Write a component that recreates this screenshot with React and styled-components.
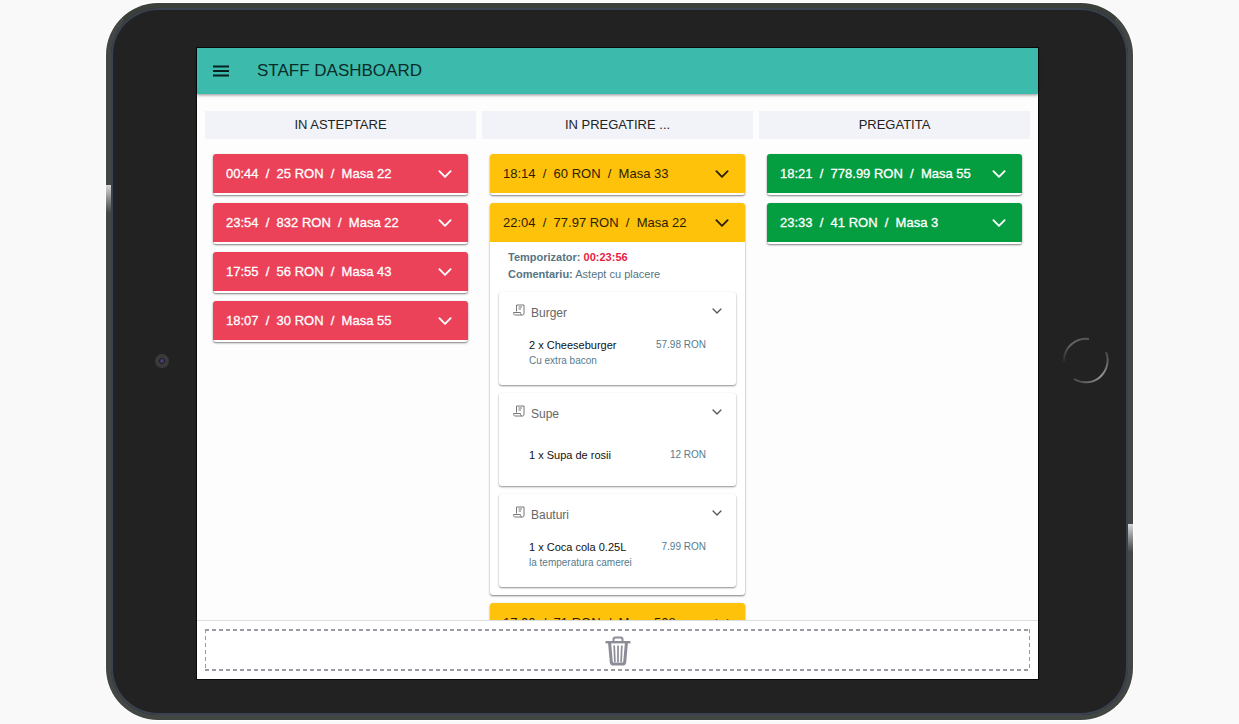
import React, { useState } from 'react'
import styled, { createGlobalStyle, css } from 'styled-components'
import { IoChevronDown } from 'react-icons/io5'

const GlobalStyle = createGlobalStyle`
  * {
    box-sizing: border-box;
  }
  body {
    margin: 0;
    background-color: #f9f9f9;
    font-family: 'Liberation Sans', Arial, sans-serif;
  }
  button {
    font-family: inherit;
    border: 0;
    padding: 0;
    background: none;
    cursor: pointer;
  }
  h1, h2, h3, p, ul {
    margin: 0;
    padding: 0;
    font-weight: normal;
  }
`
const Page = styled.div`
  display: flex;
  height: 100vh;
  padding: 3px 106px 4px;
`
const Tablet = styled.div`
  position: relative;
  display: flex;
  flex: 1;
  min-width: 0;
  padding: 40px 0 36px;
  border: 5px solid #424743;
  border-top-color: #3a3f3a;
  border-radius: 52px;
  background-color: #222;
  box-shadow: inset 0 0 0 2px #3a4150, 0 0 0 1px #fff;
`
const SideButton = styled.span`
  position: absolute;
  width: 5px;
  height: 28px;
  background: linear-gradient(#d8d8d8, #8a8c8a 50%, #424743);
  ${props =>
    props.$side === 'left'
      ? css`
          left: -5px;
          top: 25%;
        `
      : css`
          right: -5px;
          top: 73%;
        `}
`
const Bezel = styled.div`
  display: flex;
  flex: none;
  align-items: center;
  justify-content: center;
  width: ${props => props.$width};
  padding-bottom: 5px;
`
const Camera = styled.span`
  width: 14px;
  height: 14px;
  margin-left: 16px;
  border: 4px solid #3a3a3a;
  border-radius: 50%;
  background-color: #4c3c6b;
  box-shadow: inset 0 0 0 1px #1b1725;
`
const HomeButton = styled.button`
  width: 48px;
  height: 48px;
  margin-left: 6px;
`
const Screen = styled.div`
  display: flex;
  flex: 1;
  flex-direction: column;
  min-width: 0;
  background-color: #fdfdfd;
  box-shadow: 0 0 0 1px #0a0a0a;
`
const Header = styled.header`
  display: flex;
  flex: none;
  align-items: center;
  height: 46px;
  padding: 0 16px;
  gap: 28px;
  background-color: #3cbbad;
  color: #0b2b28;
  box-shadow: 0 1px 3px rgba(0, 0, 0, 0.45);
`
const MenuButton = styled.button`
  display: flex;
  color: #06211e;
`
const Title = styled.h1`
  font-size: 17px;
  line-height: 20px;
`
const Board = styled.main`
  display: grid;
  flex: 1;
  grid-template-columns: repeat(3, minmax(0, 1fr));
  gap: 6px;
  min-height: 0;
  padding: 17px 8px 0;
  overflow: hidden;
`
const ColumnTitle = styled.h2`
  background-color: #f2f3f8;
  color: #222;
  font-size: 13px;
  line-height: 28px;
  text-align: center;
`
const OrderList = styled.div`
  display: flex;
  flex-direction: column;
  gap: 8px;
  padding: 15px 8px 0;
`
const OrderCard = styled.article`
  padding-bottom: 2px;
  border-radius: 3px;
  background-color: #fff;
  box-shadow: 0 1px 2px rgba(0, 0, 0, 0.5);
`
const colors = {
  waiting: { background: '#eb4259', text: '#fff' },
  cooking: { background: '#ffc20a', text: '#2b2100' },
  ready: { background: '#049d40', text: '#fff' }
}
const OrderHeader = styled.button`
  display: flex;
  align-items: center;
  justify-content: space-between;
  width: 100%;
  height: 39px;
  padding: 0 13px;
  border-radius: 3px 3px 0 0;
  background-color: ${props => colors[props.$status].background};
  color: ${props => colors[props.$status].text};
  font-size: 13px;
  white-space: pre;
  ${props =>
    props.$status !== 'cooking' &&
    css`
      -webkit-text-stroke: 0.3px #fff;
    `}
`
const OrderBody = styled.div`
  display: flex;
  flex-direction: column;
  gap: 8px;
  padding: 7px 9px 6px;
`
const Info = styled.div`
  padding: 0 9px 1px;
  color: #567483;
  font-size: 11px;
  line-height: 17px;
`
const Timer = styled.strong`
  color: #e8213f;
`
const GroupCard = styled.section`
  height: 93px;
  padding: 12px 12px 0 14px;
  border-radius: 3px;
  background-color: #fff;
  box-shadow: 0 1px 2px rgba(0, 0, 0, 0.45);
`
const GroupHeader = styled.button`
  display: flex;
  align-items: flex-start;
  width: 100%;
  gap: 6px;
  color: #555;
`
const GroupName = styled.span`
  flex: 1;
  color: #666;
  font-size: 12px;
  line-height: 18px;
  text-align: left;
`
const Product = styled.div`
  display: flex;
  justify-content: space-between;
  padding: ${props => (props.$single ? '24px' : '15px')} 18px 0 16px;
  color: #567b8c;
  font-size: 10px;
  line-height: 16px;
`
const ProductName = styled.p`
  color: #111;
  font-size: 11px;
`
const Footer = styled.footer`
  flex: none;
  padding: 8px;
  border-top: 1px solid #ddd;
  background-color: #fff;
`
const dashes = direction =>
  `repeating-linear-gradient(${direction}, #9a9ba3 0 4px, transparent 4px 7px)`

const TrashButton = styled.button`
  display: flex;
  align-items: center;
  justify-content: center;
  width: 100%;
  height: 42px;
  padding-top: 2px;
  background: ${dashes('90deg')} top / 100% 2px no-repeat,
    ${dashes('90deg')} bottom / 100% 2px no-repeat,
    ${dashes('180deg')} left / 1px 100% no-repeat,
    ${dashes('180deg')} right / 1px 100% no-repeat;
`

const MenuIcon = () => (
  <svg width='16' height='12' stroke='currentColor' strokeWidth='2'>
    <path d='M0 1.5H16M0 6H16M0 10.5H16' />
  </svg>
)

const TrashIcon = () => (
  <svg width='26' height='30' viewBox='0 0 26 30' fill='none' stroke='#8c8c98'>
    <path d='M8.5 6V3.5Q8.500 1.500 10.500 1.500H15.500Q17.500 1.500 17.500 3.500V6' strokeWidth='2' />
    <path d='M.5 6.200H25.500' strokeWidth='2.400' />
    <path
      d='M4.500 6L6.300 26Q6.500 28 8.500 28H17.500Q19.500 28 19.700 26L21.500 6'
      strokeWidth='3'
    />
    <path d='M9.200 9.500L9.900 26M13 9.500V26M16.800 9.500L16.100 26' strokeWidth='1.700' />
  </svg>
)

const ReceiptIcon = () => (
  <svg
    width='12'
    height='12'
    viewBox='0 0 24 24'
    fill='none'
    stroke='#777'
    strokeWidth='2'
  >
    <path d='M7 15V2h15v16c0 3-1 4-3 4H4c-2 0-3-2-3-5h14c0 3 1 5 3 5' />
    <path d='M11 6h7M11 10h5' />
  </svg>
)

const HomeRing = () => (
  <svg width='48' height='48' viewBox='0 0 48 48' fill='none' strokeWidth='2'>
    <defs>
      <linearGradient id='ringLow' x1='1' y1='0' x2='0' y2='1'>
        <stop offset='0' stopColor='#444' />
        <stop offset='0.5' stopColor='#999' />
        <stop offset='1' stopColor='#444' />
      </linearGradient>
      <linearGradient id='ringHigh' x1='1' y1='0' x2='0' y2='1'>
        <stop offset='0' stopColor='#555' />
        <stop offset='0.5' stopColor='#666' />
        <stop offset='1' stopColor='#2a2a2a' />
      </linearGradient>
    </defs>
    <path d='M44 15A22 22 0 0 1 12 42' stroke='url(#ringLow)' />
    <path d='M2 25A22 22 0 0 1 27 2' stroke='url(#ringHigh)' />
  </svg>
)

const columns = [
  {
    title: 'IN ASTEPTARE',
    status: 'waiting',
    orders: [
      { time: '00:44', total: '25', table: '22' },
      { time: '23:54', total: '832', table: '22' },
      { time: '17:55', total: '56', table: '43' },
      { time: '18:07', total: '30', table: '55' }
    ]
  },
  {
    title: 'IN PREGATIRE ...',
    status: 'cooking',
    orders: [
      { time: '18:14', total: '60', table: '33' },
      {
        time: '22:04',
        total: '77.97',
        table: '22',
        timer: '00:23:56',
        comment: 'Astept cu placere',
        groups: [
          {
            name: 'Burger',
            product: 'Cheeseburger',
            count: 2,
            price: '57.98',
            note: 'Cu extra bacon'
          },
          { name: 'Supe', product: 'Supa de rosii', count: 1, price: '12' },
          {
            name: 'Bauturi',
            product: 'Coca cola 0.25L',
            count: 1,
            price: '7.99',
            note: 'la temperatura camerei'
          }
        ]
      },
      { time: '17:00', total: '71', table: '508' }
    ]
  },
  {
    title: 'PREGATITA',
    status: 'ready',
    orders: [
      { time: '18:21', total: '778.99', table: '55' },
      { time: '23:33', total: '41', table: '3' }
    ]
  }
]

const Group = ({ group }) => {
  const [open, setOpen] = useState(true)

  return (
    <GroupCard>
      <GroupHeader onClick={() => setOpen(!open)}>
        <ReceiptIcon />
        <GroupName>{group.name}</GroupName>
        <IoChevronDown size={14} />
      </GroupHeader>
      {open && (
        <Product $single={!group.note}>
          <div>
            <ProductName>
              {group.count} x {group.product}
            </ProductName>
            {group.note && <p>{group.note}</p>}
          </div>
          <p>{group.price} RON</p>
        </Product>
      )}
    </GroupCard>
  )
}

const Order = ({ order, status }) => {
  const [open, setOpen] = useState(true)

  return (
    <OrderCard>
      <OrderHeader $status={status} onClick={() => setOpen(!open)}>
        <span>{`${order.time}  /  ${order.total} RON  /  Masa ${order.table}`}</span>
        <IoChevronDown size={20} />
      </OrderHeader>
      {open && order.groups && (
        <OrderBody>
          <Info>
            <p>
              <strong>Temporizator:</strong> <Timer>{order.timer}</Timer>
            </p>
            <p>
              <strong>Comentariu:</strong> {order.comment}
            </p>
          </Info>
          {order.groups.map(group => (
            <Group key={group.name} group={group} />
          ))}
        </OrderBody>
      )}
    </OrderCard>
  )
}

const App = () => {
  return (
    <Page>
      <GlobalStyle />
      <Tablet>
        <SideButton $side='left' />
        <SideButton $side='right' />
        <Bezel $width='86px'>
          <Camera />
        </Bezel>
        <Screen>
          <Header>
            <MenuButton aria-label='Menu'>
              <MenuIcon />
            </MenuButton>
            <Title>STAFF DASHBOARD</Title>
          </Header>
          <Board>
            {columns.map(column => (
              <section key={column.status}>
                <ColumnTitle>{column.title}</ColumnTitle>
                <OrderList>
                  {column.orders.map(order => (
                    <Order
                      key={order.time}
                      order={order}
                      status={column.status}
                    />
                  ))}
                </OrderList>
              </section>
            ))}
          </Board>
          <Footer>
            <TrashButton aria-label='Delete order'>
              <TrashIcon />
            </TrashButton>
          </Footer>
        </Screen>
        <Bezel $width='90px'>
          <HomeButton aria-label='Home'>
            <HomeRing />
          </HomeButton>
        </Bezel>
      </Tablet>
    </Page>
  )
}

export default App
